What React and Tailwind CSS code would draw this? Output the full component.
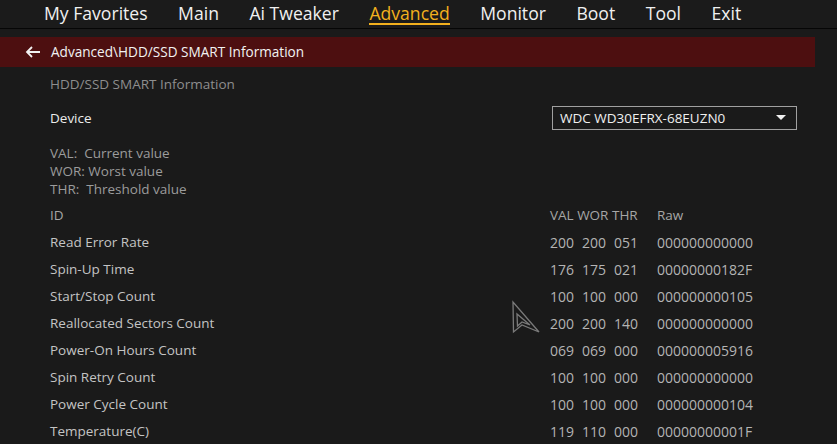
import React from 'react';

const tabs = ['My Favorites', 'Main', 'Ai Tweaker', 'Advanced', 'Monitor', 'Boot', 'Tool', 'Exit'];

const rows = [
    ['Read Error Rate', '200', '200', '051', '000000000000'],
    ['Spin-Up Time', '176', '175', '021', '00000000182F'],
    ['Start/Stop Count', '100', '100', '000', '000000000105'],
    ['Reallocated Sectors Count', '200', '200', '140', '000000000000'],
    ['Power-On Hours Count', '069', '069', '000', '000000005916'],
    ['Spin Retry Count', '100', '100', '000', '000000000000'],
    ['Power Cycle Count', '100', '100', '000', '000000000104'],
    ['Temperature(C)', '119', '110', '000', '00000000001F'],
];

const App = () => {
    return (
        <div className="relative w-[837px] h-[444px] overflow-hidden bg-[#1a1a1a] font-['Open_Sans',sans-serif]">
            {/* Top tabs */}
            <div className="h-[29px] border-b border-[#060606] bg-[#1b1b1b] flex items-start pl-[44px] gap-[30.5px]">
                {tabs.map((t) => (
                    <div
                        key={t}
                        className={
                            t === 'Advanced'
                                ? 'text-[17.6px] leading-[26px] text-[#f2b01e] border-b-2 border-[#f2b01e] h-[25px]'
                                : 'text-[17.6px] leading-[26px] text-[#f0f0f0]'
                        }
                    >
                        {t}
                    </div>
                ))}
            </div>

            {/* Breadcrumb */}
            <div className="mt-[8px] w-[815px] h-[30px] bg-[#4d0f10] flex items-center pl-[25px] gap-[10px] text-[13.6px] text-[#f2f2f2]">
                <svg width="16" height="12" viewBox="0 0 16 12" fill="none" stroke="#f2f2f2" strokeWidth="1.8">
                    <path d="M15 6H2M7 1L2 6l5 5" />
                </svg>
                <span>Advanced\HDD/SSD SMART Information</span>
            </div>

            <div className="pl-[50px] text-[13.5px]">
                <div className="h-[34px] flex items-center text-[#8e8e8e]">HDD/SSD SMART Information</div>

                <div className="h-[34px] flex items-center justify-between pr-[40px]">
                    <span className="text-[#ececec]">Device</span>
                    <div className="w-[245px] h-[24px] border border-[#a0a0a0] flex items-center justify-between pl-[7px] pr-[10px] text-[#f0f0f0]">
                        <span>WDC WD30EFRX-68EUZN0</span>
                        <svg width="10" height="6" viewBox="0 0 10 6">
                            <path d="M0 0h10L5 5z" fill="#f0f0f0" />
                        </svg>
                    </div>
                </div>

                <div className="mt-[9px] leading-[18px] text-[#9c9c9c]">
                    <div className="whitespace-pre">VAL:  Current value</div>
                    <div>WOR: Worst value</div>
                    <div className="whitespace-pre">THR:  Threshold value</div>
                </div>

                <div className="mt-[4px] text-[#a6a6a6]">
                    <div className="h-[27px] flex items-center">
                        <span className="w-[500px]">ID</span>
                        <span className="w-[107px]">VAL WOR THR</span>
                        <span>Raw</span>
                    </div>
                    {rows.map((r) => (
                        <div key={r[0]} className="h-[27px] flex items-center text-[#c4c4c4]">
                            <span className="w-[500px]">{r[0]}</span>
                            <span className="w-[32px] text-[14px] text-[#b4b4b4]">{r[1]}</span>
                            <span className="w-[32px] text-[14px] text-[#b4b4b4]">{r[2]}</span>
                            <span className="w-[43px] text-[14px] text-[#b4b4b4]">{r[3]}</span>
                            <span className="text-[14px] text-[#b4b4b4]">{r[4]}</span>
                        </div>
                    ))}
                </div>
            </div>

            {/* Mouse cursor */}
            <svg className="absolute left-[511px] top-[300px]" width="30" height="34" viewBox="0 0 30 34" fill="none" stroke="#7a7a7a" strokeWidth="1.3">
                <path d="M2 2 L2.5 32 L11 25 L28 32 Z" />
                <path d="M6 14 L6.5 26 L11 22 L19 25 Z" />
            </svg>
        </div>
    );
};

export default App;
